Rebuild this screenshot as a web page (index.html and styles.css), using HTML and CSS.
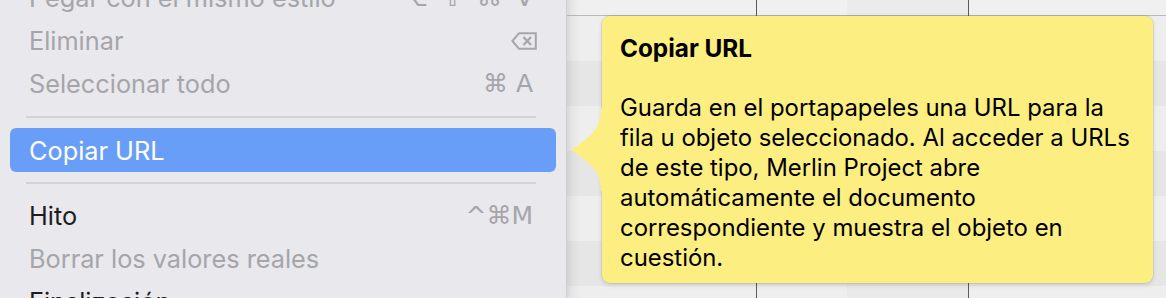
FILE: index.html
```html
<!DOCTYPE html>
<html lang="es">
<head>
<meta charset="utf-8">
<title>Copiar URL</title>
<link rel="stylesheet" href="styles.css">
</head>
<body>
<div class="screen">
  <div class="menu">
    <div class="item disabled"><span class="label">Pegar con el mismo estilo</span><span class="keys wide">⌥ ⇧ ⌘ V</span></div>
    <div class="item disabled"><span class="label">Eliminar</span><span class="keys">
      <svg class="del" width="26" height="18" viewBox="0 0 26 18"><path d="M8 1.2 H24.8 V16.8 H8 L1.4 9 Z" fill="none" stroke="currentColor" stroke-width="2" stroke-linejoin="miter"/><path d="M12.5 5 L20 13 M20 5 L12.5 13" stroke="currentColor" stroke-width="2.2"/></svg>
    </span></div>
    <div class="item disabled"><span class="label">Seleccionar todo</span><span class="keys">⌘ A</span></div>
    <div class="sep"></div>
    <div class="item selected"><span class="label">Copiar URL</span></div>
    <div class="sep sep2"></div>
    <div class="item"><span class="label">Hito</span><span class="keys">^⌘M</span></div>
    <div class="item disabled"><span class="label">Borrar los valores reales</span></div>
    <div class="item"><span class="label">Finalización</span><span class="keys chev">
      <svg width="12" height="20" viewBox="0 0 12 20"><path d="M2 2 L10 10 L2 18" fill="none" stroke="#1d1d1f" stroke-width="2.2"/></svg>
    </span></div>
  </div>
  <div class="canvas"></div>
  <svg class="arrow" width="34" height="82" viewBox="0 0 34 82"><path d="M34 0 L30 0 C30 18, 22 27, 0 41 C22 55, 30 64, 30 82 L34 82 Z" fill="#fcee80"/></svg>
  <div class="tooltip">
    <div class="tt-title">Copiar URL</div>
    <div class="tt-body">Guarda en el portapapeles una URL para la<br>fila u objeto seleccionado. Al acceder a URLs<br>de este tipo, Merlin Project abre<br>automáticamente el documento<br>correspondiente y muestra el objeto en<br>cuestión.</div>
  </div>
</div>
</body>
</html>
```

FILE: styles.css
```css
html, body {
  margin: 0;
  padding: 0;
  width: 1166px;
  height: 298px;
  overflow: hidden;
  background: #efefef;
}

.screen {
  position: relative;
  display: flex;
  width: 1166px;
  height: 298px;
  overflow: hidden;
  font-family: "Inter", "Liberation Sans", sans-serif;
}

.menu {
  width: 566px;
  flex: none;
  margin-top: -24px;
  background: #e8e8ed;
  border-right: 1px solid #cfcfd2;
  display: flex;
  flex-direction: column;
  box-shadow: 2px 0 6px rgba(0, 0, 0, 0.06);
  position: relative;
  z-index: 1;
}

.item {
  height: 43px;
  margin: 0 10px;
  padding: 0 23px 0 19px;
  display: flex;
  align-items: center;
  justify-content: space-between;
  font-size: 25.3px;
  color: #1d1d1f;
  border-radius: 6px;
  flex: none;
}

.item.disabled {
  color: #a5a5aa;
}

.item .keys {
  color: #a5a5aa;
}

.keys {
  display: flex;
  align-items: center;
  font-family: "DejaVu Sans", "Inter", sans-serif;
  font-size: 25px;
}

.keys.wide {
  word-spacing: 6px;
}

.item.selected {
  height: 44px;
  background: #699ef8;
  color: #ffffff;
}

.sep {
  height: 23px;
  flex: none;
  display: flex;
  align-items: center;
  margin: 0 30px 0 26px;
}

.sep::before {
  content: "";
  display: block;
  width: 100%;
  height: 2px;
  background: #d2d2d7;
}

.sep2 {
  height: 22px;
}

.del {
  display: block;
  margin-right: -4px;
}

.chev {
  margin-top: 14px;
}

.canvas {
  flex: 1;
  background:
    linear-gradient(#5a5a5a, #5a5a5a) 189px 0 / 1px 100% no-repeat,
    linear-gradient(#5a5a5a, #5a5a5a) 401px 0 / 1px 100% no-repeat,
    linear-gradient(rgba(0, 0, 0, 0.02), rgba(0, 0, 0, 0.02)) 280px 0 / 121px 100% no-repeat,
    linear-gradient(#b9b9b9, #b9b9b9) 0 15px / 100% 1px no-repeat,
    linear-gradient(to right, rgba(0,0,0,0.05), rgba(0,0,0,0) 14px) 0 0 / 20px 100% no-repeat,
    repeating-linear-gradient(to bottom, #eeeeee 0 45px, #e6e6e6 45px 90px) 0 16px / 100% 100% no-repeat,
    #f0f0f0;
}

.tooltip {
  position: absolute;
  left: 602px;
  top: 16px;
  width: 551px;
  height: 267px;
  box-sizing: border-box;
  padding: 17px 10px 0 18px;
  background: #fcee80;
  border-radius: 8px;
  box-shadow: 0 0 0 0.5px rgba(0, 0, 0, 0.12), 0 2px 5px rgba(0, 0, 0, 0.12);
  color: #000;
  z-index: 2;
  white-space: nowrap;
}

.arrow {
  position: absolute;
  left: 571px;
  top: 109px;
  z-index: 3;
}

.tt-title {
  font-size: 24.3px;
  font-weight: 700;
  line-height: 30px;
}

.tt-body {
  margin-top: 30px;
  font-size: 23.9px;
  line-height: 30px;
}
```
